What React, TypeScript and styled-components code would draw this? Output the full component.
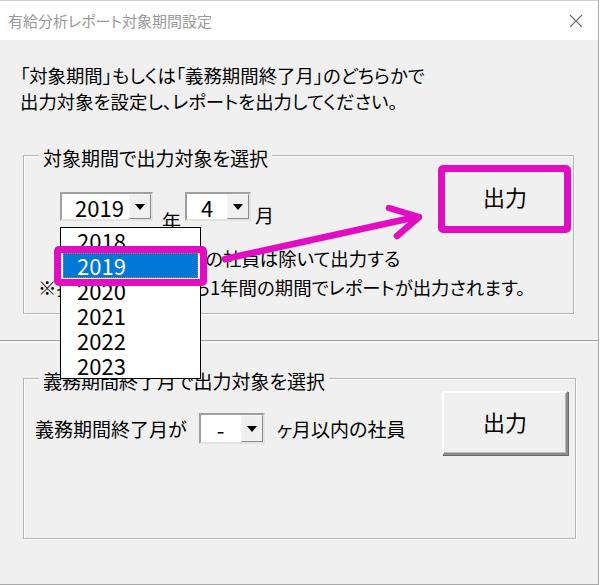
import React from 'react';
import styled, {createGlobalStyle} from 'styled-components';

const GlobalStyle = createGlobalStyle`
  html, body {
    margin: 0;
    padding: 0;
    background: #ffffff;
  }
  body {
    font-family: "Noto Sans CJK JP", "Noto Sans", sans-serif;
  }
`;

const MAGENTA = '#e20cc2';

const Window = styled.div`
  position: relative;
  width: 599px;
  height: 585px;
  box-sizing: border-box;
  border-top: 1px solid #cfcfcf;
  border-right: 1px solid #a8a8a8;
  border-bottom: 1px solid #a8a8a8;
  display: flex;
  flex-direction: column;
  background: #f0f0f0;
  color: #000;
  font-family: "Noto Sans CJK JP", "Noto Sans", sans-serif;
  font-feature-settings: "palt";
  overflow: hidden;
`;

const TitleBar = styled.div`
  height: 39px;
  flex: none;
  background: #ffffff;
  display: flex;
  align-items: center;
  justify-content: space-between;
  padding: 0 15px 0 8px;
`;

const TitleText = styled.span`
  font-size: 15px;
  color: #9a9a9a;
`;

const Body = styled.div`
  flex: 1;
  display: flex;
  flex-direction: column;
  padding-top: 22px;
`;

const Intro = styled.p`
  margin: 0 0 0 20px;
  font-size: 18.4px;
  line-height: 26px;
  white-space: nowrap;
`;

const GroupBox = styled.div<{ $top: number; $width: number; $height: number }>`
  position: relative;
  flex: none;
  margin: ${p => p.$top}px 0 0 23px;
  width: ${p => p.$width}px;
  height: ${p => p.$height}px;
  box-sizing: border-box;
  border: 1px solid #b4b4b4;
  box-shadow: 1px 1px 0 #ffffff, inset 1px 1px 0 #ffffff;
`;

const Legend = styled.span`
  position: absolute;
  top: -11px;
  left: 15px;
  padding: 0 4px;
  background: #f0f0f0;
  font-size: 19px;
  line-height: 26px;
  white-space: nowrap;
`;

const GroupContent = styled.div<{ $pad: string }>`
  display: flex;
  justify-content: space-between;
  align-items: flex-start;
  padding: ${p => p.$pad};
`;

const Column = styled.div<{ $top: number }>`
  flex: 1;
  min-width: 0;
  display: flex;
  flex-direction: column;
  margin-top: ${p => p.$top}px;
  white-space: nowrap;
`;

const Row = styled.div<{ $indent?: number; $top?: number }>`
  display: flex;
  align-items: flex-start;
  margin-left: ${p => p.$indent ?? 0}px;
  margin-top: ${p => p.$top ?? 0}px;
`;

const CenterRow = styled.div<{ $top: number }>`
  display: flex;
  align-items: center;
  margin-top: ${p => p.$top}px;
  font-size: 19px;
  line-height: 26px;
  white-space: nowrap;
`;

const Label = styled.span<{ $drop?: number; $gap?: number }>`
  font-size: 19px;
  line-height: 26px;
  margin-top: ${p => p.$drop ?? 0}px;
  margin-left: ${p => p.$gap ?? 0}px;
`;

const Text = styled.div`
  font-size: 18.4px;
  line-height: 26px;
  display: flex;
  align-items: center;
`;

const Combo = styled.div<{ $w: number; $h: number; $gap?: number }>`
  display: flex;
  flex: none;
  width: ${p => p.$w}px;
  height: ${p => p.$h}px;
  margin: 0 ${p => p.$gap ?? 0}px;
  box-sizing: border-box;
  border: 2px solid;
  border-color: #a0a0a0 #e3e3e3 #e3e3e3 #a0a0a0;
  background: #ffffff;
`;

const ComboValue = styled.span<{ $pad?: number }>`
  flex: 1;
  text-align: center;
  padding-left: ${p => p.$pad ?? 0}px;
  font-size: 22px;
  line-height: 24px;
  align-self: center;
  font-feature-settings: normal;
`;

const DropButton = styled.span`
  width: 22px;
  flex: none;
  box-sizing: border-box;
  background: #f0f0f0;
  border: 1px solid;
  border-color: #f7f7f7 #8a8a8a #8a8a8a #f7f7f7;
  display: flex;
  align-items: center;
  justify-content: center;
`;

const Triangle = styled.span`
  width: 0;
  height: 0;
  border-left: 5px solid transparent;
  border-right: 5px solid transparent;
  border-top: 6px solid #000;
`;

const CheckBox = styled.span`
  width: 13px;
  height: 13px;
  box-sizing: border-box;
  border: 1px solid #333;
  background: #fff;
  margin-right: 6px;
`;

const OutputButton = styled.button<{ $h: number }>`
  width: 126px;
  height: ${p => p.$h}px;
  flex: none;
  box-sizing: border-box;
  background: #f0f0f0;
  border: 2px solid;
  border-color: #ffffff #8c8c8c #8c8c8c #ffffff;
  box-shadow: inset -1px -1px 0 #b8b8b8, 1px 1px 0 #696969;
  font-family: inherit;
  font-size: 22px;
  color: #000;
  padding: 0 0 4px 0;
  cursor: default;
`;

const Divider = styled.div`
  flex: none;
  margin-top: 26px;
  height: 1px;
  border-top: 1px solid #a0a0a0;
  border-bottom: 1px solid #ffffff;
`;

const DropList = styled.ul`
  position: absolute;
  left: 60px;
  top: 226px;
  width: 141px;
  margin: 0;
  padding: 0;
  list-style: none;
  box-sizing: border-box;
  border: 1px solid #000;
  background: #ffffff;
`;

const DropItem = styled.li<{ $selected?: boolean }>`
  margin: 0 2px;
  height: 25px;
  box-sizing: border-box;
  padding-left: 13px;
  font-size: 22px;
  line-height: 23px;
  background: ${p => (p.$selected ? '#0078d7' : 'transparent')};
  color: ${p => (p.$selected ? '#ffffff' : '#000000')};
  border: 1px ${p => (p.$selected ? 'dotted #c07a3a' : 'solid transparent')};
`;

const Highlight = styled.div<{ $x: number; $y: number; $w: number; $h: number }>`
  position: absolute;
  left: ${p => p.$x}px;
  top: ${p => p.$y}px;
  width: ${p => p.$w}px;
  height: ${p => p.$h}px;
  box-sizing: border-box;
  border: 7px solid ${MAGENTA};
  border-radius: 5px;
  pointer-events: none;
`;

const ArrowSvg = styled.svg`
  position: absolute;
  left: 0;
  top: 0;
  pointer-events: none;
`;

const years = [2018, 2019, 2020, 2021, 2022, 2023];

const CloseIcon = () => (
  <svg width="14" height="14" viewBox="0 0 14 14">
    <path d="M1 1 L13 13 M13 1 L1 13" stroke="#6f6f6f" strokeWidth="1.1" fill="none" />
  </svg>
);

const ComboBox: React.FC<{ value: string; w: number; h: number; gap?: number; pad?: number }> = ({ value, w, h, gap, pad }) => (
  <Combo $w={w} $h={h} $gap={gap}>
    <ComboValue $pad={pad}>{value}</ComboValue>
    <DropButton>
      <Triangle />
    </DropButton>
  </Combo>
);

export default function App() {
  return (
    <>
      <GlobalStyle />
      <Window>
        <TitleBar>
          <TitleText>有給分析レポート対象期間設定</TitleText>
          <CloseIcon />
        </TitleBar>
        <Body>
          <Intro>
            「対象期間」もしくは「義務期間終了月」のどちらかで
            <br />
            出力対象を設定し、レポートを出力してください。
          </Intro>

          <GroupBox $top={41} $width={551} $height={159}>
            <Legend>対象期間で出力対象を選択</Legend>
            <GroupContent $pad="11px 5px 0 14px">
              <Column $top={25}>
                <Row $indent={22}>
                  <ComboBox value="2019" w={93} h={29} pad={8} />
                  <Label $drop={16} $gap={9}>年</Label>
                  <ComboBox value="4" w={66} h={29} gap={4} />
                  <Label $drop={10}>月</Label>
                </Row>
                <Row $indent={20} $top={11}>
                  <Text>
                    <CheckBox />
                    期間中退職済みの社員は除いて出力する
                  </Text>
                </Row>
                <Row $top={3}>
                  <Text>※指定年月の1日から1年間の期間でレポートが出力されます。</Text>
                </Row>
              </Column>
              <OutputButton $h={62}>出力</OutputButton>
            </GroupContent>
          </GroupBox>

          <Divider />

          <GroupBox $top={35} $width={553} $height={161}>
            <Legend>義務期間終了月で出力対象を選択</Legend>
            <GroupContent $pad="12px 7px 0 11px">
              <CenterRow $top={22}>
                <span>義務期間終了月が</span>
                <ComboBox value="-" w={66} h={31} gap={12} />
                <span>ヶ月以内の社員</span>
              </CenterRow>
              <OutputButton $h={64}>出力</OutputButton>
            </GroupContent>
          </GroupBox>
        </Body>

        <DropList>
          {years.map(y => (
            <DropItem key={y} $selected={y === 2019}>
              {y}
            </DropItem>
          ))}
        </DropList>

        <Highlight $x={54} $y={245} $w={153} $h={40} />
        <Highlight $x={438} $y={164} $w={133} $h={68} />

        <ArrowSvg width="600" height="585" viewBox="0 0 600 585">
          <g stroke={MAGENTA} strokeWidth="6.5" strokeLinecap="round" strokeLinejoin="round" fill="none">
            <path d="M225 258 L416 216" />
            <path d="M389 207 L419 216 L397 235" />
          </g>
        </ArrowSvg>
      </Window>
    </>
  );
}
